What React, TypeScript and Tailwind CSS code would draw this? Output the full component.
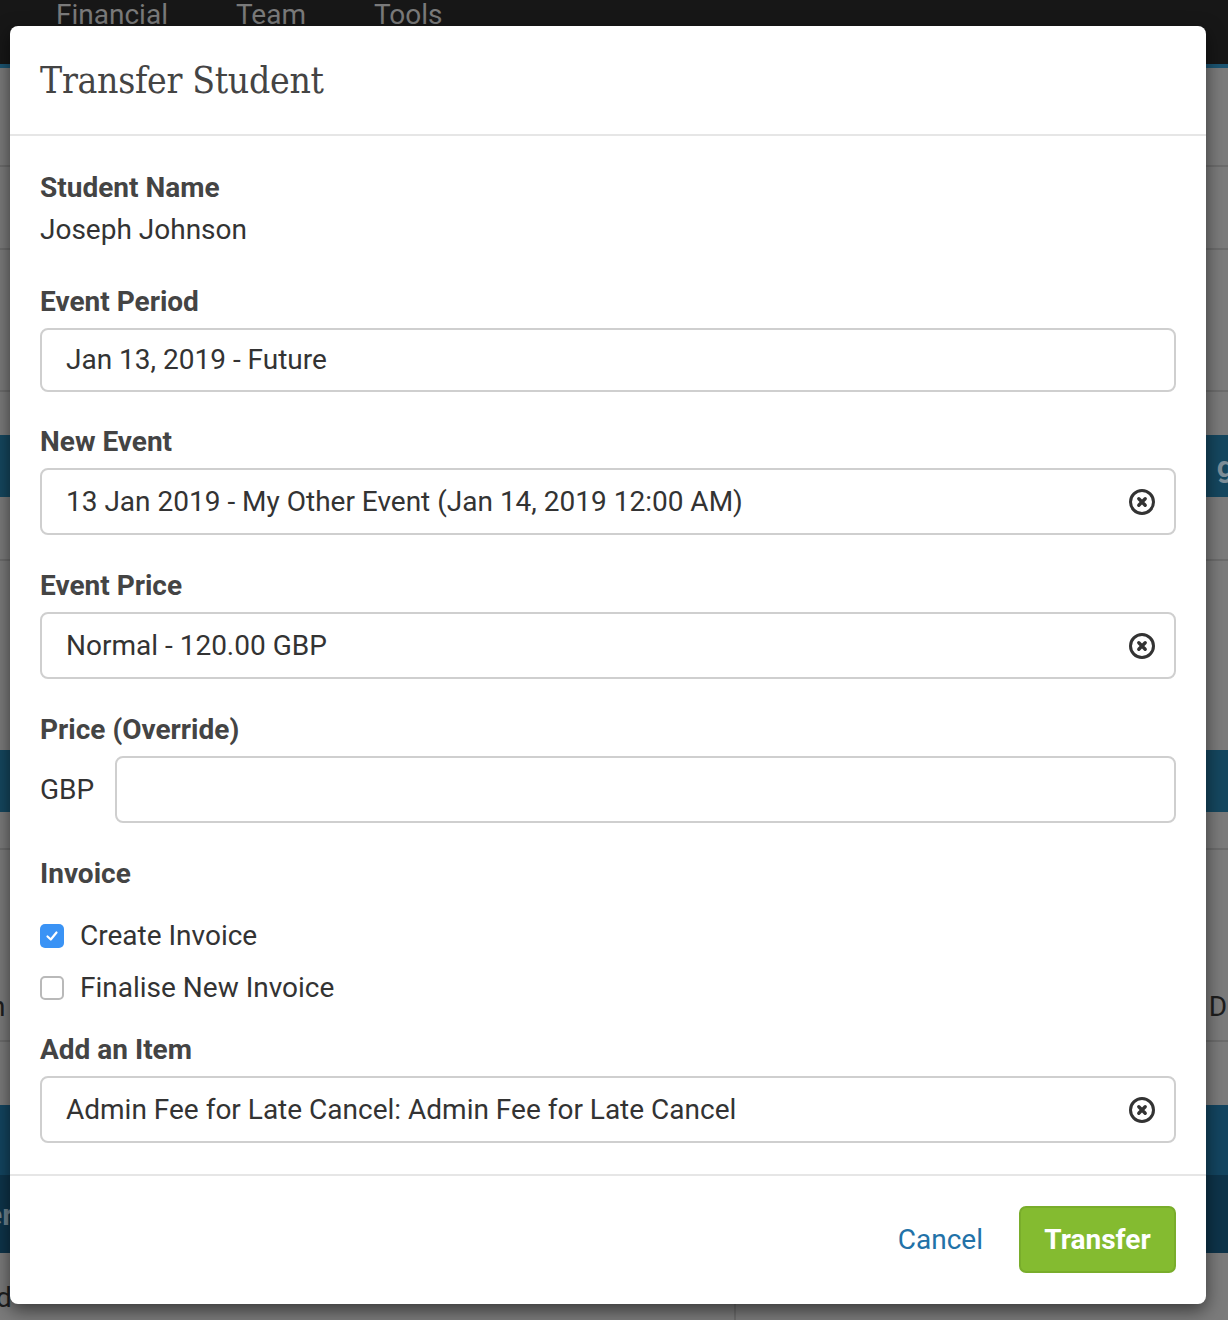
import React from "react";

const ClearIcon = () => (
  <svg width="28" height="28" viewBox="0 0 28 28" fill="none">
    <circle cx="14" cy="14" r="11.5" stroke="#333" strokeWidth="3" />
    <path d="M10.8 10.8 L17.2 17.2 M17.2 10.8 L10.8 17.2" stroke="#333" strokeWidth="3.4" strokeLinecap="round" />
  </svg>
);

const Label = ({ children, className = "" }: { children: React.ReactNode; className?: string }) => (
  <div className={`text-[28px] leading-[40px] font-bold text-[#444] ${className}`}>{children}</div>
);

const SelectBox = ({ value }: { value: string }) => (
  <div className="mt-[6px] h-[67px] rounded-[8px] border-2 border-[#cfcfcf] flex items-center justify-between pl-[24px] pr-[18px]">
    <span className="text-[28px] text-[#333]">{value}</span>
    <ClearIcon />
  </div>
);

const Background = () => (
  <div className="flex flex-col w-full h-[1320px] bg-[#7b7b7b] font-['Roboto',sans-serif]">
    <div className="h-[64px] shrink-0 bg-[#171717] flex items-start text-[#7a7a7a] text-[28px] leading-[30px]">
      <span className="ml-[56px]">Financial</span>
      <span className="ml-[68px]">Team</span>
      <span className="ml-[68px]">Tools</span>
    </div>
    <div className="h-[4px] shrink-0 bg-[#1c5572]" />
    <div className="h-[99px] shrink-0 border-b-2 border-[#6c6c6c]" />
    <div className="h-[83px] shrink-0 border-b-2 border-[#6c6c6c]" />
    <div className="h-[142px] shrink-0 border-b-2 border-[#6c6c6c]" />
    <div className="h-[43px] shrink-0" />
    <div className="h-[62px] shrink-0 bg-[#15475f] flex items-center justify-end text-[#7e8f99] text-[30px] font-bold">
      <span className="-mr-[6px]">g</span>
    </div>
    <div className="h-[64px] shrink-0 border-b-2 border-[#6c6c6c]" />
    <div className="h-[189px] shrink-0" />
    <div className="h-[62px] shrink-0 bg-[#15475f]" />
    <div className="h-[38px] shrink-0 border-b-2 border-[#6c6c6c]" />
    <div className="h-[192px] shrink-0 border-b-2 border-[#6c6c6c] flex items-end justify-between text-[28px] text-[#1e1e1e] pb-[12px]">
      <span className="-ml-[10px]">n</span>
      <span className="-mr-[14px]">De</span>
    </div>
    <div className="h-[63px] shrink-0" />
    <div className="h-[70px] shrink-0 bg-[#134560]" />
    <div className="h-[78px] shrink-0 bg-[#0e344a] flex items-center text-[30px] font-bold text-[#6f8490]">
      <span className="-ml-[14px]">er</span>
    </div>
    <div className="flex-1 flex text-[28px] text-[#1e1e1e]">
      <span className="-ml-[4px] mt-[24px]">d</span>
      <div className="ml-[722px] border-l-2 border-[#6c6c6c]" />
    </div>
  </div>
);

export default function App() {
  return (
    <div className="relative w-full h-[1320px] overflow-hidden">
      <Background />
      <div className="absolute left-[10px] top-[26px] w-[1196px] bg-white rounded-[8px] shadow-[0_6px_18px_rgba(0,0,0,0.55)] font-['Roboto',sans-serif] text-[#444]">
        <div className="h-[110px] border-b-2 border-[#e6e6e6] flex items-center pl-[30px]">
          <h1 className="font-['DejaVu_Serif','Liberation_Serif',serif] font-stretch-condensed text-[37px] text-[#444] tracking-[-0.3px] mt-[2px]">
            Transfer Student
          </h1>
        </div>
        <div className="px-[30px] pt-[32px] pb-[31px]">
          <Label>Student Name</Label>
          <div className="text-[28px] leading-[40px] text-[#333] mt-[2px]">Joseph Johnson</div>

          <Label className="mt-[32px]">Event Period</Label>
          <div className="mt-[6px] h-[64px] rounded-[8px] border-2 border-[#cfcfcf] flex items-center pl-[24px]">
            <span className="text-[28px] text-[#333]">Jan 13, 2019 - Future</span>
          </div>

          <Label className="mt-[30px]">New Event</Label>
          <SelectBox value="13 Jan 2019 - My Other Event (Jan 14, 2019 12:00 AM)" />

          <Label className="mt-[31px]">Event Price</Label>
          <SelectBox value="Normal - 120.00 GBP" />

          <Label className="mt-[31px]">Price (Override)</Label>
          <div className="mt-[6px] flex items-center gap-[21px]">
            <span className="text-[28px] text-[#333] w-[54px]">GBP</span>
            <div className="flex-1 h-[67px] rounded-[8px] border-2 border-[#cfcfcf]" />
          </div>

          <Label className="mt-[31px]">Invoice</Label>
          <div className="mt-[22px] flex flex-col gap-[12px]">
            <div className="flex items-center h-[40px]">
              <div className="w-[24px] h-[24px] rounded-[5px] bg-[#3a93f5] flex items-center justify-center">
                <svg width="16" height="16" viewBox="0 0 16 16" fill="none">
                  <path d="M3.5 8.5 L6.8 11.5 L12.5 4.5" stroke="white" strokeWidth="2.2" strokeLinecap="round" strokeLinejoin="round" />
                </svg>
              </div>
              <span className="ml-[16px] text-[28px] text-[#333]">Create Invoice</span>
            </div>
            <div className="flex items-center h-[40px]">
              <div className="w-[24px] h-[24px] rounded-[5px] border-2 border-[#b9b9b9] bg-white" />
              <span className="ml-[16px] text-[28px] text-[#333]">Finalise New Invoice</span>
            </div>
          </div>

          <Label className="mt-[22px]">Add an Item</Label>
          <SelectBox value="Admin Fee for Late Cancel: Admin Fee for Late Cancel" />
        </div>
        <div className="border-t-2 border-[#e6e6e6] px-[30px] pt-[30px] pb-[31px] flex items-center justify-end">
          <span className="text-[28px] text-[#2272a8] mr-[36px]">Cancel</span>
          <button className="h-[67px] w-[157px] rounded-[7px] bg-[#84bb30] border-2 border-[#79ad2b] text-white text-[28px] font-bold">
            Transfer
          </button>
        </div>
      </div>
    </div>
  );
}
